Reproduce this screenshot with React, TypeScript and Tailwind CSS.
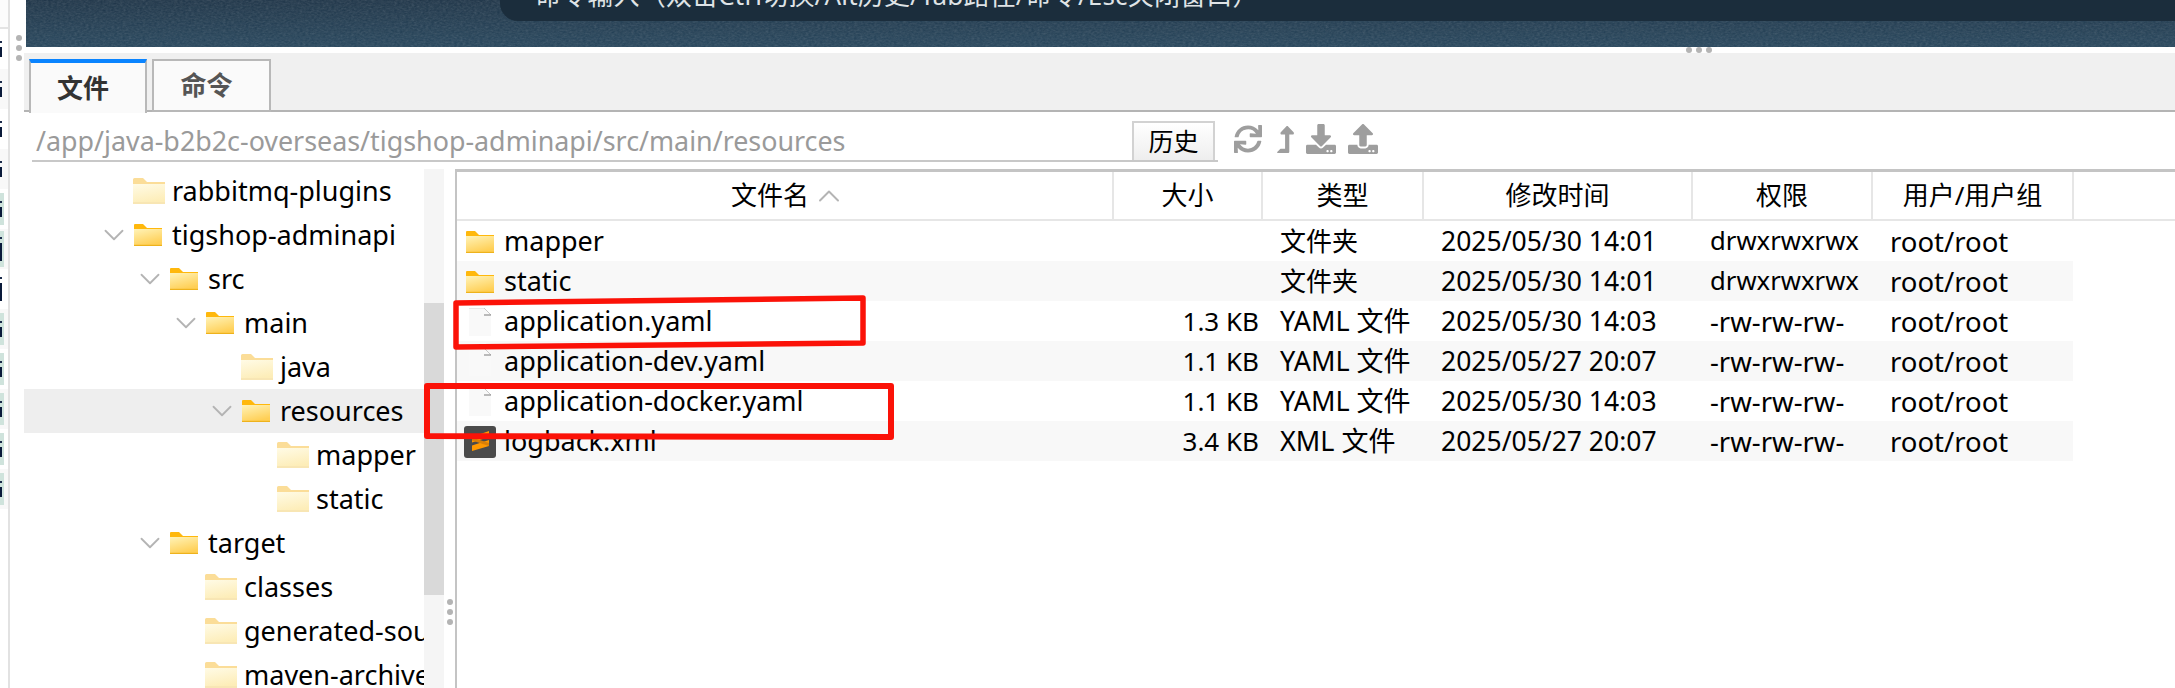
import React from "react";
import { FaSync, FaLevelUpAlt, FaDownload, FaUpload } from "react-icons/fa";
import { ChevronDown, ChevronUp } from "lucide-react";

const FONT = "font-['Noto_Sans','Noto_Sans_CJK_SC',sans-serif]";

function Folder({ pale = false }: { pale?: boolean }) {
  if (pale) {
    return (
      <svg width="32" height="26" viewBox="0 0 32 26" className="shrink-0">
        <defs>
          <linearGradient id="fp" x1="0" y1="0" x2="0.3" y2="1">
            <stop offset="0" stopColor="#fffbe6" />
            <stop offset="1" stopColor="#fdedb8" />
          </linearGradient>
        </defs>
        <path d="M0 1.5Q0 0 1.5 0H10L14 4H32V9H0Z" fill="#fbdd98" />
        <path d="M0 6H32V24.5Q32 26 30.5 26H1.5Q0 26 0 24.5Z" fill="url(#fp)" />
        <rect x="0" y="24" width="32" height="2" fill="#f8e6b4" />
      </svg>
    );
  }
  return (
    <svg width="28" height="22" viewBox="0 0 28 22" className="shrink-0">
      <defs>
        <linearGradient id="fb" x1="0" y1="0" x2="0.4" y2="1">
          <stop offset="0" stopColor="#fff3b8" />
          <stop offset="1" stopColor="#ffcf55" />
        </linearGradient>
      </defs>
      <path d="M0 1Q0 0 1 0H9L13 4H28V8H0Z" fill="#ffb80c" />
      <path d="M0 5H28V22H0Z" fill="url(#fb)" />
      <rect x="0" y="20.8" width="28" height="1.2" fill="#eeb21c" />
    </svg>
  );
}

function FileIcon() {
  return (
    <svg width="22" height="28" viewBox="0 0 22 28" className="shrink-0">
      <path d="M0 0H15L22 7V28H0Z" fill="#f9f9f9" />
      <path d="M15 0L22 7" stroke="#c8c8c8" strokeWidth="1" />
      <path d="M15 7H22" stroke="#8f8f8f" strokeWidth="1.2" />
      <path d="M0 0H15" stroke="#d5d5d5" strokeWidth="1" />
    </svg>
  );
}

function SublimeIcon() {
  return (
    <svg width="32" height="32" viewBox="0 0 32 32" className="shrink-0">
      <rect width="32" height="32" rx="3" fill="#4b4b4b" />
      <path d="M25 5V11L8 16.5V11Z" fill="#ff9800" />
      <path d="M25 14V20L8 25V19.5Z" fill="#ff9800" />
      <path d="M8 11.5L25 17V20L8 14.5Z" fill="#d97f08" />
    </svg>
  );
}

type TreeNode = { name: string; depth: number; open?: boolean; selected?: boolean };

const tree: TreeNode[] = [
  { name: "rabbitmq-plugins", depth: 0 },
  { name: "tigshop-adminapi", depth: 0, open: true },
  { name: "src", depth: 1, open: true },
  { name: "main", depth: 2, open: true },
  { name: "java", depth: 3 },
  { name: "resources", depth: 3, open: true, selected: true },
  { name: "mapper", depth: 4 },
  { name: "static", depth: 4 },
  { name: "target", depth: 1, open: true },
  { name: "classes", depth: 2 },
  { name: "generated-sources", depth: 2 },
  { name: "maven-archiver", depth: 2 },
];

type FileRow = {
  name: string;
  icon: "folder" | "file" | "sublime";
  size: string;
  type: string;
  date: string;
  perm: string;
};

const files: FileRow[] = [
  { name: "mapper", icon: "folder", size: "", type: "文件夹", date: "2025/05/30 14:01", perm: "drwxrwxrwx" },
  { name: "static", icon: "folder", size: "", type: "文件夹", date: "2025/05/30 14:01", perm: "drwxrwxrwx" },
  { name: "application.yaml", icon: "file", size: "1.3 KB", type: "YAML 文件", date: "2025/05/30 14:03", perm: "-rw-rw-rw-" },
  { name: "application-dev.yaml", icon: "file", size: "1.1 KB", type: "YAML 文件", date: "2025/05/27 20:07", perm: "-rw-rw-rw-" },
  { name: "application-docker.yaml", icon: "file", size: "1.1 KB", type: "YAML 文件", date: "2025/05/30 14:03", perm: "-rw-rw-rw-" },
  { name: "logback.xml", icon: "sublime", size: "3.4 KB", type: "XML 文件", date: "2025/05/27 20:07", perm: "-rw-rw-rw-" },
];

const COLS = "grid grid-cols-[657px_149px_161px_269px_180px_201px]";

function Dot() {
  return <span className="block h-[6px] w-[6px] rounded-full bg-[#b4b4b4]" />;
}

const stripRows: { green?: boolean; tinted?: boolean; tall?: boolean }[] = [
  {},
  { tinted: true },
  {},
  { tinted: true },
  { green: true },
  { tinted: true, green: true, tall: true },
  { tall: true },
  { green: true, tinted: true },
  { green: true },
  { green: true, tinted: true },
  { green: true },
  { green: true, tinted: true },
];

export default function App() {
  return (
    <div className={`relative flex h-[688px] w-[2175px] overflow-hidden bg-white text-black ${FONT}`}>
      {/* sliver of the neighbouring panel */}
      <div className="flex w-[10px] shrink-0 flex-col border-r-2 border-[#e2e2e2]">
        <div className="h-[29px] shrink-0 border-b-2 border-[#e4e4e4] bg-[#fcfcfc]" />
        {stripRows.map((r, i) => (
          <div key={i} className={`flex h-[40px] shrink-0 items-center ${r.tinted ? "bg-[#f8f8f8]" : ""}`}>
            <div className={`flex w-[4px] flex-col justify-center ${r.tall ? "h-[36px]" : "h-[32px]"} ${r.green ? "bg-[#cfe3dc]" : ""}`}>
              <span className="mb-[4px] block h-[2px] w-[2px] bg-[#1a2a4a]" />
              <span className={`block w-[2px] bg-[#0a1a3a] ${r.tall ? "h-[18px]" : "h-[10px]"}`} />
            </div>
          </div>
        ))}
      </div>

      {/* gutter with drag handle */}
      <div className="flex w-[14px] shrink-0 flex-col items-center gap-[4px] pt-[35px] pl-[4px]">
        <Dot />
        <Dot />
        <Dot />
      </div>

      <div className="flex min-w-0 flex-1 flex-col">
        {/* terminal background band */}
        <div className="relative ml-[2px] h-[47px] shrink-0 overflow-hidden bg-gradient-to-b from-[#1c3347] to-[#24445b]">
          <svg className="absolute inset-0 h-full w-full opacity-20">
            <filter id="grain">
              <feTurbulence type="fractalNoise" baseFrequency="0.35 0.6" numOctaves="2" seed="4" />
              <feColorMatrix type="saturate" values="0" />
            </filter>
            <rect width="100%" height="100%" filter="url(#grain)" />
          </svg>
          <div className="absolute top-[-30px] right-0 left-[474px] h-[51px] rounded-bl-[18px] bg-[#1b2d3c] pl-[35px]">
            <div className="pt-[10px] text-[26px] leading-[30px] tracking-[0.18px] whitespace-nowrap text-[#dfe3e6] [text-spacing-trim:space-all]">
              命令输入（双击Ctrl切换/Alt历史/Tab路径/命令/Esc关闭窗口）
            </div>
          </div>
        </div>

        {/* handle */}
        <div className="flex h-[6px] shrink-0 items-center gap-[4px] pl-[1662px]">
          <Dot />
          <Dot />
          <Dot />
        </div>

        {/* tabs */}
        <div className="relative flex h-[59px] shrink-0 items-start gap-[5px] border-b-2 border-[#b4b4b4] bg-[#f0f0f0] pt-[6px] pl-[5px]">
          <div className="relative z-10 flex h-[54px] w-[118px] items-center justify-center border-x-2 border-t-4 border-x-[#b8b8b8] border-t-[#0a84ff] bg-[#fafafa] pr-[10px] text-[26px] font-bold text-[#333]">
            文件
          </div>
          <div className="flex h-[53px] w-[119px] items-center justify-center border-2 border-[#b8b8b8] bg-[#fafafa] pr-[10px] text-[26px] font-bold text-[#555]">
            命令
          </div>
        </div>

        {/* path row */}
        <div className="flex h-[57px] shrink-0 items-end pb-[7px] pl-[8px]">
          <div className="flex h-[50px] w-[1186px] items-end justify-between border-b-2 border-[#c8c8c8]">
            <div className="self-center pt-[10px] pl-[4px] text-[26.85px] leading-[36px] whitespace-nowrap text-[#9a9a9a]">
              /app/java-b2b2c-overseas/tigshop-adminapi/src/main/resources
            </div>
            <div className="mr-[3px] flex h-[39px] w-[83px] items-center justify-center border-2 border-b-0 border-[#d2d2d2] bg-gradient-to-b from-white to-[#eeeeee] text-[25px]">
              历史
            </div>
          </div>
          <div className="flex h-[50px] items-center pt-[4px] pl-[15px] text-[#9e9e9e]">
            <span className="flex w-[29px] justify-center"><FaSync size={28} /></span>
            <span className="ml-[14px] flex w-[19px] justify-center"><FaLevelUpAlt size={27} /></span>
            <span className="ml-[11px] flex w-[30px] justify-center"><FaDownload size={30} /></span>
            <span className="ml-[12px] flex w-[30px] justify-center"><FaUpload size={30} /></span>
          </div>
        </div>

        {/* split */}
        <div className="flex min-h-0 flex-1">
          <div className="h-full w-[400px] shrink-0 overflow-hidden">
            {tree.map((n) => (
              <div
                key={n.name}
                className={`flex h-[44px] items-center whitespace-nowrap text-[27px] ${n.selected ? "bg-[#eeeeee]" : ""}`}
                style={{ paddingLeft: 76 + n.depth * 36 }}
              >
                <span className="flex w-[28px] shrink-0 justify-center">
                  {n.open && <ChevronDown size={34} strokeWidth={1.3} className="shrink-0 text-[#b4b4b4]" />}
                </span>
                <span className={`flex w-[44px] shrink-0 ${n.open ? "pl-[6px]" : "pl-[5px]"}`}>
                  <Folder pale={!n.open} />
                </span>
                <span>{n.name}</span>
              </div>
            ))}
          </div>

          {/* scrollbar */}
          <div className="flex w-[20px] shrink-0 flex-col bg-[#f5f5f5] pt-[134px] pb-[93px]">
            <div className="flex-1 bg-[#d9d9d9]" />
          </div>

          {/* splitter */}
          <div className="flex w-[11px] shrink-0 flex-col items-center gap-[4px] pt-[430px]">
            <Dot />
            <Dot />
            <Dot />
          </div>

          {/* table */}
          <div className="min-w-0 flex-1 border-t-[3px] border-l-2 border-[#c4c4c4]">
            <div className={`${COLS} h-[49px] border-b-2 border-[#e6e6e6] text-[26px]`}>
              {["文件名", "大小", "类型", "修改时间", "权限", "用户/用户组"].map((h, i) => (
                <div key={h} className="flex items-center justify-center gap-[11px] border-r-2 border-[#e6e6e6]">
                  {h}
                  {i === 0 && <ChevronUp size={36} strokeWidth={1.3} className="-mx-[9px] shrink-0 text-[#b4b4b4]" />}
                </div>
              ))}
            </div>
            {files.map((f, i) => (
              <div key={f.name} className={`${COLS} h-[40px] w-[1616px] items-center whitespace-nowrap text-[27px] ${i % 2 ? "bg-[#f8f8f8]" : ""}`}>
                <div className="flex h-full items-center">
                  <span className="flex w-[47px] shrink-0 justify-center pr-[2px]">
                    {f.icon === "folder" && <Folder />}
                    {f.icon === "file" && <FileIcon />}
                    {f.icon === "sublime" && <SublimeIcon />}
                  </span>
                  <span>{f.name}</span>
                </div>
                <div className="pr-[4px] text-right text-[26px]">{f.size}</div>
                <div className={`pl-[17px] ${f.icon === "folder" ? "text-[26px]" : ""}`}>{f.type}</div>
                <div className="pl-[17px] text-[26.5px]">{f.date}</div>
                <div className={`pl-[17px] ${f.icon === "folder" ? "text-[25.7px]" : "text-[27.5px]"}`}>{f.perm}</div>
                <div className="pl-[17px] text-[27.5px]">root/root</div>
              </div>
            ))}
          </div>
        </div>
      </div>

      {/* hand-drawn red annotation boxes */}
      <svg className="pointer-events-none absolute inset-0 h-full w-full" fill="none" stroke="#fb1208" strokeLinejoin="round">
        <path d="M456 303L863 298V343L456 347Z" strokeWidth="5.5" />
        <path d="M427 386H891V437L427 436Z" strokeWidth="6" />
      </svg>
    </div>
  );
}
